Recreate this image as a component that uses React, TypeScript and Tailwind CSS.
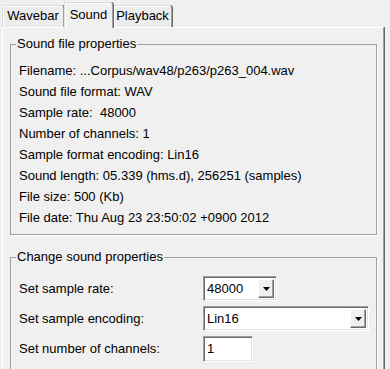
import type { ReactNode } from "react";

const info = [
  "Filename: ...Corpus/wav48/p263/p263_004.wav",
  "Sound file format: WAV",
  "Sample rate:  48000",
  "Number of channels: 1",
  "Sample format encoding: Lin16",
  "Sound length: 05.339 (hms.d), 256251 (samples)",
  "File size: 500 (Kb)",
  "File date: Thu Aug 23 23:50:02 +0900 2012",
];

function Tab({ label, active, width }: { label: string; active?: boolean; width: string }) {
  return (
    <div
      className={
        active
          ? `relative z-10 -mb-px flex h-[26px] ${width} items-start justify-center rounded-tr-[3px] border-l border-t border-r border-l-[#dcdcdc] border-t-[#dcdcdc] border-r-[#a0a0a0] bg-[#f0f0f0] pt-[4px] shadow-[inset_1px_1px_0_#ffffff,1px_0_0_#696969]`
          : `flex h-[22px] ${width} items-start justify-center rounded-tr-[3px] border-l border-t border-r border-l-[#dcdcdc] border-t-[#dcdcdc] border-r-[#a0a0a0] bg-[#ececec] pt-[2px] shadow-[inset_1px_1px_0_#ffffff,1px_0_0_#696969]`
      }
    >
      <span className="leading-[16px]">{label}</span>
    </div>
  );
}

// etched group box; the caption sits over the top line
function Group({ title, children, className }: { title: string; children: ReactNode; className?: string }) {
  return (
    <div className={`relative border border-[#a0a0a0] shadow-[1px_1px_0_#ffffff] ${className ?? ""}`}>
      <span className="absolute -top-[9px] left-[5px] bg-[#f0f0f0] px-px leading-[16px]">{title}</span>
      {children}
    </div>
  );
}

function Arrow() {
  return (
    <svg width="7" height="4" viewBox="0 0 7 4">
      <path d="M0 0h7L3.5 4z" fill="#000" />
    </svg>
  );
}

function Combo({ value, width }: { value: string; width: string }) {
  return (
    <div
      className={`flex h-[25px] ${width} items-stretch border border-t-[#a0a0a0] border-l-[#a0a0a0] border-b-white border-r-white bg-white p-px shadow-[inset_1px_1px_0_#696969,inset_-1px_-1px_0_#e3e3e3]`}
    >
      <span className="flex flex-1 items-center pl-[2px] leading-[16px]">{value}</span>
      <span className="my-px mr-px flex w-[16px] items-center justify-center border border-t-white border-l-white border-b-[#696969] border-r-[#696969] bg-[#f0f0f0] shadow-[inset_-1px_-1px_0_#a0a0a0]">
        <Arrow />
      </span>
    </div>
  );
}

export default function App() {
  return (
    <div
      className="h-[369px] w-[390px] overflow-hidden bg-[#f0f0f0] text-[13px] text-black"
      style={{ fontFamily: '"Liberation Sans", Arial, sans-serif' }}
    >
      {/* tab strip */}
      <div className="flex h-[27px] items-end pl-[2px]">
        <Tab label="Wavebar" width="w-[62px]" />
        <Tab label="Sound" width="w-[49px]" active />
        <Tab label="Playback" width="w-[59px]" />
      </div>

      {/* page */}
      <div className="ml-[2px] h-[342px] w-[382px] border-l border-t border-r border-l-white border-t-white border-r-[#a0a0a0] pl-[7px] pr-[6px] pt-[16px] shadow-[1px_0_0_#696969]">
        <Group title="Sound file properties" className="pb-[6px] pl-[8px] pt-[15px]">
          {info.map((line) => (
            <p key={line} className="whitespace-pre leading-[21px]">
              {line}
            </p>
          ))}
        </Group>

        <Group title="Change sound properties" className="mt-[22px] h-[140px] pl-[8px] pt-[18px]">
          <div className="grid grid-cols-[184px_1fr] gap-y-[5px]">
            <span className="flex items-center">Set sample rate:</span>
            <Combo value="48000" width="w-[74px]" />
            <span className="flex items-center">Set sample encoding:</span>
            <Combo value="Lin16" width="w-[166px]" />
            <span className="flex items-center">Set number of channels:</span>
            <div className="flex h-[26px] w-[50px] items-center border border-t-[#a0a0a0] border-l-[#a0a0a0] border-b-white border-r-white bg-white pl-[3px] shadow-[inset_1px_1px_0_#696969,inset_-1px_-1px_0_#e3e3e3]">
              1
            </div>
          </div>
        </Group>
      </div>
    </div>
  );
}
